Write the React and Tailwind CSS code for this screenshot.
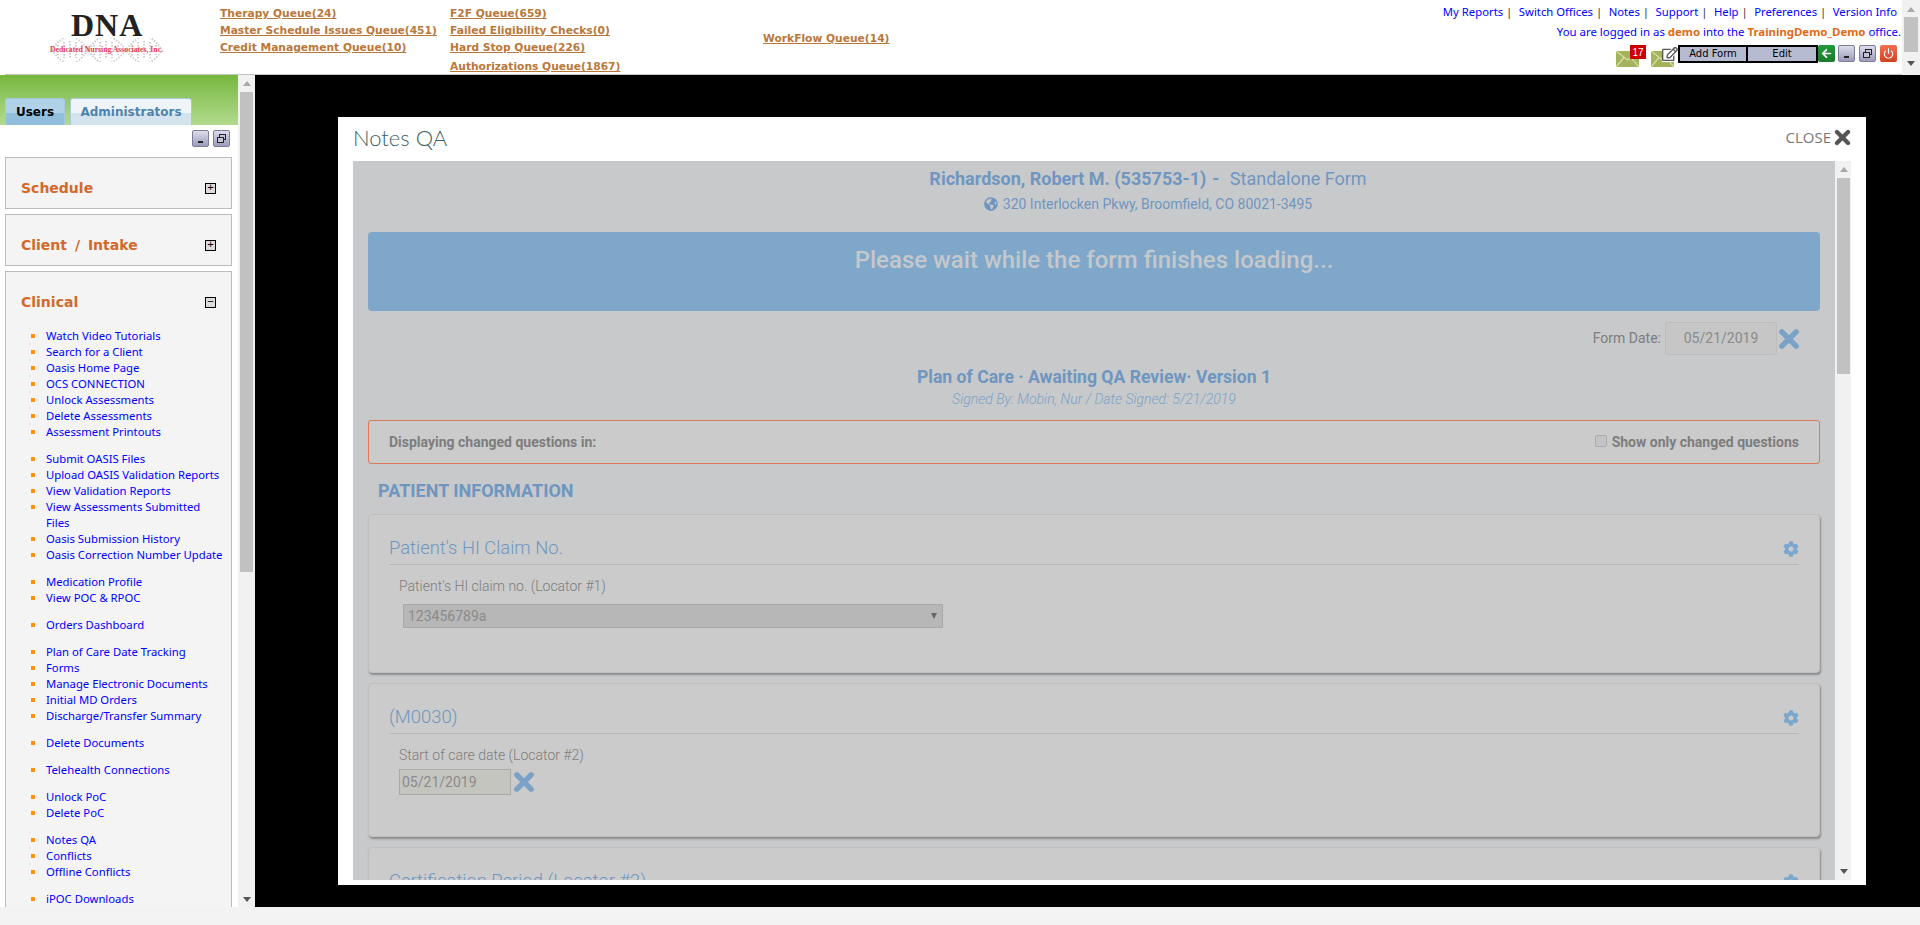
import { FaCog, FaGlobeAmericas, FaArrowLeft, FaRegEdit } from 'react-icons/fa';
import { Power } from 'lucide-react';

const linkGroups = [
  ['Watch Video Tutorials', 'Search for a Client', 'Oasis Home Page', 'OCS CONNECTION', 'Unlock Assessments', 'Delete Assessments', 'Assessment Printouts'],
  ['Submit OASIS Files', 'Upload OASIS Validation Reports', 'View Validation Reports', 'View Assessments Submitted Files', 'Oasis Submission History', 'Oasis Correction Number Update'],
  ['Medication Profile', 'View POC & RPOC'],
  ['Orders Dashboard'],
  ['Plan of Care Date Tracking', 'Forms', 'Manage Electronic Documents', 'Initial MD Orders', 'Discharge/Transfer Summary'],
  ['Delete Documents'],
  ['Telehealth Connections'],
  ['Unlock PoC', 'Delete PoC'],
  ['Notes QA', 'Conflicts', 'Offline Conflicts'],
  ['iPOC Downloads'],
];

const topLinks = ['My Reports', 'Switch Offices', 'Notes', 'Support', 'Help', 'Preferences'];

function Logo() {
  return (
    <div className="relative ml-[50px] h-[74px] w-[120px] shrink-0">
      <svg className="absolute left-0 top-[38px]" width="114" height="24" viewBox="0 0 114 24" fill="none" stroke="#cdcdcd" strokeWidth="2" strokeDasharray="1.5 1.5">
        <path d="M2 12 C14 -6 26 -6 38 12 S62 30 76 12 S100 -6 112 12" />
        <path d="M2 12 C14 30 26 30 38 12 S62 -6 76 12 S100 30 112 12" />
        <path d="M8 7 V17 M14 4 V20 M20 3 V21 M26 4 V20 M32 7 V17 M44 7 V17 M50 4 V20 M56 3 V21 M62 4 V20 M68 7 V17 M82 7 V17 M88 4 V20 M94 3 V21 M100 4 V20 M106 7 V17" />
      </svg>
      <div className="absolute left-[21px] top-[8px] font-['Liberation_Serif',serif] text-[32px] font-bold leading-[34px] tracking-[1px] text-[#222]">DNA</div>
      <div className="absolute left-0 top-[45px] whitespace-nowrap font-['Liberation_Serif',serif] text-[7.7px] font-bold leading-[9px] text-[#e8404f]">Dedicated Nursing Associates, Inc.</div>
    </div>
  );
}

function QueueLink({ children, className }) {
  return <a className={`block whitespace-nowrap underline ${className || ''}`}>{children}</a>;
}

function WinButton({ type }) {
  return (
    <span className="flex h-[17px] w-[17px] items-center justify-center rounded-[2px] border border-[#7d7d9a] bg-gradient-to-b from-[#dcdcea] to-[#9c9cba]">
      {type === 'min' && <span className="mt-[7px] h-[2px] w-[5px] bg-[#222]" />}
      {type === 'restore' && (
        <svg width="11" height="11" viewBox="0 0 11 11" fill="none" stroke="#222" strokeWidth="1">
          <rect x="3.5" y="1.5" width="6" height="5" />
          <rect x="1.5" y="4.5" width="6" height="5" fill="#c4c4d8" />
        </svg>
      )}
    </span>
  );
}

function Envelope() {
  return (
    <svg width="23" height="16" viewBox="0 0 23 16">
      <rect width="23" height="16" fill="#a4b45c" />
      <path d="M0 0 L11.5 9 L23 0 M0 16 L8 6.5 M23 16 L15 6.5" fill="none" stroke="#d6e0a4" strokeWidth="1.2" />
    </svg>
  );
}

function XIcon({ className, size = 20 }) {
  return (
    <svg className={className} width={size} height={size} viewBox="0 0 20 20" fill="none" stroke="currentColor" strokeWidth="5" strokeLinecap="round">
      <path d="M3.5 3.5 L16.5 16.5 M16.5 3.5 L3.5 16.5" />
    </svg>
  );
}

function Header() {
  return (
    <header className="relative flex h-[75px] shrink-0 bg-white">
      <div className="absolute bottom-0 left-[5px] right-[18px] h-px bg-[#c4c4c4]" />
      <Logo />
      <div className="ml-[50px] w-[230px] shrink-0 pt-[5px] font-['DejaVu_Sans',sans-serif] text-[10.7px] font-bold leading-[17px] text-[#b9783a]">
        <QueueLink>Therapy Queue(24)</QueueLink>
        <QueueLink>Master Schedule Issues Queue(451)</QueueLink>
        <QueueLink>Credit Management Queue(10)</QueueLink>
      </div>
      <div className="w-[313px] shrink-0 pt-[5px] font-['DejaVu_Sans',sans-serif] text-[10.7px] font-bold leading-[17px] text-[#b9783a]">
        <QueueLink>F2F Queue(659)</QueueLink>
        <QueueLink>Failed Eligibility Checks(0)</QueueLink>
        <QueueLink>Hard Stop Queue(226)</QueueLink>
        <QueueLink className="mt-[2px]">Authorizations Queue(1867)</QueueLink>
      </div>
      <div className="pt-[30px] font-['DejaVu_Sans',sans-serif] text-[10.7px] font-bold leading-[17px] text-[#b9783a]">
        <QueueLink>WorkFlow Queue(14)</QueueLink>
      </div>

      <div className="ml-auto flex w-[520px] flex-col items-end pr-[1px] font-['Noto_Sans',sans-serif] text-[11.3px] text-[#0000ff]">
        <div className="mr-[4px] mt-[4px] flex h-[16px] items-center whitespace-nowrap leading-[16px]">
          {topLinks.map((l) => (
            <span key={l} className="mr-[6.5px]">{l}<span className="text-[#333]"> |</span></span>
          ))}
          <span>Version Info</span>
        </div>
        <div className="mt-[4px] h-[16px] whitespace-nowrap text-[11.4px] leading-[16px]">
          You are logged in as <b className="text-[#e06a14]">demo</b> into the <b className="text-[#e06a14]">TrainingDemo_Demo</b> office.
        </div>
        <div className="relative mr-[4px] mt-[5px] flex h-[22px] items-start">
          <div className="relative mr-[12px] mt-[6px]">
            <Envelope />
            <span className="absolute -top-[6px] left-[14px] flex h-[14px] w-[16px] items-center justify-center bg-[#cc0000] font-['Liberation_Sans',sans-serif] text-[10px] text-white">17</span>
          </div>
          <div className="relative mt-[6px] w-[27px]">
            <Envelope />
            <FaRegEdit className="absolute -top-[5px] left-[11px] bg-white text-[16px] text-[#555]" />
          </div>
          <div className="flex h-[18px] border-2 border-black bg-[#b6bbd2] font-['DejaVu_Sans',sans-serif] text-[10px] leading-[14px] text-black">
            <span className="flex w-[68px] items-center justify-center border-r-2 border-black">Add Form</span>
            <span className="flex w-[68px] items-center justify-center">Edit</span>
          </div>
          <span className="flex h-[17px] w-[17px] items-center justify-center rounded-[2px] bg-gradient-to-b from-[#1f9a3a] to-[#1c7a2c]">
            <FaArrowLeft className="text-[11px] text-white" />
          </span>
          <span className="ml-[3px] flex gap-[4px]">
            <WinButton type="min" />
            <WinButton type="restore" />
          </span>
          <span className="ml-[4px] flex h-[17px] w-[17px] items-center justify-center rounded-[2px] bg-gradient-to-b from-[#f07050] to-[#d04020]">
            <Power size={11} strokeWidth={2.5} className="text-white" />
          </span>
        </div>
      </div>

      <div className="flex w-[18px] shrink-0 flex-col items-center bg-[#f1f1f1] pt-[7px]">
        <span className="h-0 w-0 border-x-[4px] border-b-[5px] border-x-transparent border-b-[#a8a8a8]" />
        <span className="mt-[5px] h-[35px] w-[14px] bg-[#c1c1c1]" />
        <span className="mt-[9px] h-0 w-0 border-x-[4px] border-t-[5px] border-x-transparent border-t-[#555]" />
      </div>
    </header>
  );
}

function PanelHead({ title, open }) {
  return (
    <div className="flex h-[50px] items-center justify-between pl-[15px] pr-[15px] pt-[10px]">
      <span className="font-['DejaVu_Sans',sans-serif] text-[14px] font-bold [word-spacing:3px] text-[#d2692a]">{title}</span>
      <span className="flex h-[11px] w-[11px] items-center justify-center border border-black bg-[#dcdcdc] font-['Liberation_Mono',monospace] text-[11px] leading-none text-black">
        {open ? '−' : '+'}
      </span>
    </div>
  );
}

function Sidebar() {
  return (
    <aside className="flex w-[255px] shrink-0 bg-white">
      <div className="w-[238px] shrink-0 overflow-hidden">
        <div className="flex h-[50px] items-end gap-[5px] bg-gradient-to-b from-[#76b83c] to-[#b2da8c] pl-[5px]">
          <span className="flex h-[27px] w-[60px] items-center justify-center rounded-t-[3px] border border-b-0 border-[#a8c8e0] bg-[linear-gradient(#b0d2e8_55%,#90bedc_55%)] font-['DejaVu_Sans',sans-serif] text-[12px] font-bold text-black">Users</span>
          <span className="flex h-[27px] w-[122px] items-center justify-center rounded-t-[3px] border border-b-0 border-[#a8c8e0] bg-[linear-gradient(#eef4f8_55%,#d4e4ef_55%)] font-['DejaVu_Sans',sans-serif] text-[12px] font-bold text-[#4f83ad]">Administrators</span>
        </div>
        <div className="flex h-[32px] justify-end gap-[4px] pr-[8px] pt-[5px]">
          <WinButton type="min" />
          <WinButton type="restore" />
        </div>
        <div className="ml-[5px] flex w-[227px] flex-col gap-[5px]">
          <div className="h-[52px] border border-[#bcbcbc] bg-[#f4f4f4]"><PanelHead title="Schedule" /></div>
          <div className="h-[52px] border border-[#bcbcbc] bg-[#f4f4f4]"><PanelHead title="Client / Intake" /></div>
          <div className="border border-[#bcbcbc] bg-[#f4f4f4] pb-4">
            <PanelHead title="Clinical" open />
            <div className="mt-[6px] flex flex-col gap-[11px] font-['Noto_Sans',sans-serif] text-[11.3px] leading-[16px] text-[#0000ff]">
              {linkGroups.map((group, i) => (
                <ul key={i}>
                  {group.map((item) => (
                    <li key={item} className="relative pl-[40px] pr-[7px]">
                      <span className="absolute left-[25px] top-[6px] h-[4px] w-[4px] bg-[#ff9010]" />
                      {item}
                    </li>
                  ))}
                </ul>
              ))}
            </div>
          </div>
        </div>
      </div>
      <div className="flex w-[17px] shrink-0 flex-col items-center bg-[#f1f1f1] pt-[6px]">
        <span className="h-0 w-0 border-x-[4px] border-b-[5px] border-x-transparent border-b-[#a8a8a8]" />
        <span className="mt-[6px] h-[480px] w-[13px] bg-[#c1c1c1]" />
        <span className="mt-auto mb-[5px] h-0 w-0 border-x-[4px] border-t-[5px] border-x-transparent border-t-[#555]" />
      </div>
    </aside>
  );
}

function Card({ title, className, children }) {
  return (
    <section className={`shrink-0 rounded-[4px] border border-[#bfbfbf] bg-[#cbcbcb] px-[20px] shadow-[1px_2px_2px_rgba(0,0,0,0.3)] ${className}`}>
      <div className="flex h-[50px] items-end justify-between border-b border-[#b8b8b8] pb-[3px]">
        <h3 className="text-[18.4px] font-light leading-[26px] text-[#6f96c0]">{title}</h3>
        <FaCog className="mb-[4px] text-[16px] text-[#7ba7cf]" />
      </div>
      {children}
    </section>
  );
}

function Modal() {
  return (
    <div className="ml-[83px] mt-[42px] flex h-[768px] w-[1528px] flex-col bg-white px-[15px]">
      <div className="flex h-[44px] shrink-0 items-center justify-between">
        <h2 className="mb-[4px] font-['Lato',sans-serif] text-[22px] font-light text-[#42605f]">Notes QA</h2>
        <div className="mb-[3px] flex items-center gap-[3px] font-['Open_Sans',sans-serif] text-[15px] text-[#777]">
          CLOSE <XIcon className="text-[#555]" size={17} />
        </div>
      </div>
      <div className="flex h-[719px] shrink-0 overflow-hidden font-['Roboto',sans-serif]">
        <div className="flex w-[1482px] shrink-0 flex-col bg-[#c8c9cb] px-[15px] text-[#7d7d7d]">
          <div className="ml-[108px] mt-[6px] text-center text-[18px] leading-[24px] text-[#6f96c0]">
            <b className="font-bold">Richardson, Robert M. (535753-1)</b>
            <b className="mx-[6px] font-bold">-</b>
            <span> Standalone Form</span>
          </div>
          <div className="ml-[108px] mt-[3px] flex items-center justify-center gap-[5px] text-[14px] leading-[20px] text-[#6f96c0]">
            <FaGlobeAmericas className="text-[14px]" /> 320 Interlocken Pkwy, Broomfield, CO 80021-3495
          </div>
          <div className="mt-[18px] flex h-[79px] shrink-0 items-start justify-center rounded-[4px] bg-[#7fa7c9] pt-[12px] text-[24px] font-medium leading-[32px] text-[#c4c8cc]">
            Please wait while the form finishes loading...
          </div>
          <div className="mt-[11px] flex h-[33px] shrink-0 items-center justify-end pr-[20px] text-[14px]">
            <span className="mr-[4px]">Form Date:</span>
            <span className="flex h-[33px] w-[112px] items-center justify-center rounded-[3px] border border-[#bcbcbc] bg-[#c6c6c6] text-[#8a8a8a]">05/21/2019</span>
            <XIcon className="ml-[1px] text-[#7ba2c6]" size={22} />
          </div>
          <div className="mt-[10px] text-center text-[17.6px] font-bold leading-[24px] text-[#6f96c0]">Plan of Care · Awaiting QA Review· Version 1</div>
          <div className="text-center text-[14px] font-light italic leading-[20px] text-[#7ba2c6]">Signed By: Mobin, Nur / Date Signed: 5/21/2019</div>
          <div className="mt-[11px] flex h-[44px] shrink-0 items-center justify-between rounded-[3px] border border-[#d9795a] bg-[#cbcbcb] px-[20px] text-[14px] font-bold">
            <span>Displaying changed questions in:</span>
            <span className="flex items-center gap-[5px]">
              <span className="mb-[2px] h-[12px] w-[12px] rounded-[2px] border border-[#aaa] bg-[#c4c4c4]" />
              Show only changed questions
            </span>
          </div>
          <h4 className="ml-[10px] mt-[15px] text-[18px] font-bold leading-[24px] text-[#6f96c0]">PATIENT INFORMATION</h4>
          <Card title="Patient's HI Claim No." className="mt-[11px] h-[159px]">
            <div className="ml-[10px] mt-[11px] text-[14px] font-light leading-[20px]">Patient's HI claim no. (Locator #1)</div>
            <div className="ml-[14px] mt-[8px] flex h-[24px] w-[540px] items-center justify-between border border-[#a9a9a9] bg-[#b7b7b7] pl-[4px] pr-[5px] text-[14px] text-[#8a8a8a]">
              123456789a
              <span className="h-0 w-0 border-x-[3px] border-t-[6px] border-x-transparent border-t-[#666]" />
            </div>
          </Card>
          <Card title="(M0030)" className="mt-[10px] h-[154px]">
            <div className="ml-[10px] mt-[11px] text-[14px] font-light leading-[20px]">Start of care date (Locator #2)</div>
            <div className="ml-[10px] mt-[4px] flex items-center">
              <span className="flex h-[26px] w-[112px] items-center border border-[#aaa] bg-[#c5c5c0] pl-[2px] text-[14px] text-[#8a8a8a]">05/21/2019</span>
              <XIcon className="ml-[2px] text-[#7ba2c6]" size={22} />
            </div>
          </Card>
          <Card title="Certification Period (Locator #2)" className="mt-[10px] h-[150px]" />
        </div>
        <div className="flex w-[17px] shrink-0 flex-col items-center bg-[#f1f1f1] pt-[6px]">
          <span className="h-0 w-0 border-x-[4px] border-b-[5px] border-x-transparent border-b-[#a8a8a8]" />
          <span className="mt-[6px] h-[196px] w-[13px] bg-[#c1c1c1]" />
          <span className="mt-auto mb-[6px] h-0 w-0 border-x-[4px] border-t-[5px] border-x-transparent border-t-[#555]" />
        </div>
      </div>
    </div>
  );
}

export default function App() {
  return (
    <div className="flex h-[925px] w-[1920px] flex-col overflow-hidden bg-[#f3f3f3]">
      <Header />
      <div className="flex h-[832px] shrink-0 overflow-hidden">
        <Sidebar />
        <main className="flex-1 bg-black">
          <Modal />
        </main>
      </div>
    </div>
  );
}
